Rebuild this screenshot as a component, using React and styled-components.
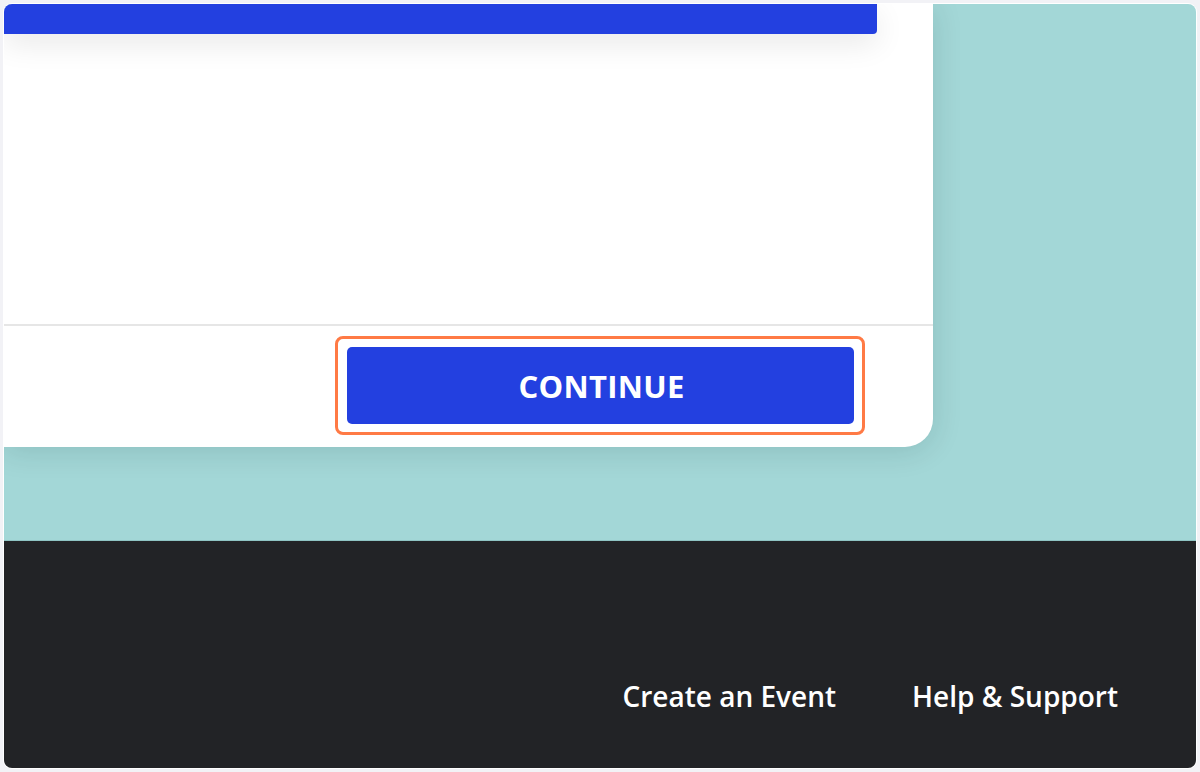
import React from 'react';
import styled, { createGlobalStyle } from 'styled-components';

const colors = {
  frame: '#f2f2f6',
  blue: '#2340e0',
  teal: '#a3d7d7',
  dark: '#222326',
  orange: '#ff7a45',
  divider: '#e6e6e6',
  white: '#ffffff',
};

const GlobalStyle = createGlobalStyle`
  html, body {
    margin: 0;
    padding: 0;
    background: ${colors.frame};
  }
  * {
    box-sizing: border-box;
  }
`;

const Frame = styled.div`
  margin: 4px;
  width: 1192px;
  height: 764px;
  border-radius: 8px;
  overflow: hidden;
  display: flex;
  flex-direction: column;
  box-shadow: 0 0 0 1px ${colors.white};
  font-family: 'Open Sans', 'Liberation Sans', sans-serif;
`;

const Stage = styled.main`
  height: 537px;
  background: ${colors.teal};
  border-bottom: 1px solid #8fc4c3;
  display: flex;
  align-items: flex-start;
`;

const Card = styled.section`
  width: 929px;
  height: 443px;
  background: ${colors.white};
  border-bottom-right-radius: 28px;
  box-shadow: 0 4px 30px rgba(0, 40, 40, 0.14);
  display: flex;
  flex-direction: column;
`;

const TopBar = styled.div`
  width: 873px;
  height: 30px;
  background: ${colors.blue};
  border-bottom-right-radius: 4px;
  box-shadow: 0 10px 30px rgba(0, 0, 0, 0.09);
`;

const CardBody = styled.div`
  flex: 1;
  border-bottom: 2px solid ${colors.divider};
`;

const CardFooter = styled.div`
  height: 121px;
  display: flex;
  justify-content: flex-end;
  align-items: flex-start;
  padding: 10px 68px 0 0;
`;

const FocusRing = styled.span`
  display: flex;
  border: 3px solid ${colors.orange};
  border-radius: 8px;
  padding: 8px 8px 8px 9px;
`;

const Button = styled.button`
  width: 507px;
  height: 77px;
  border: none;
  border-radius: 5px;
  background: ${colors.blue};
  color: ${colors.white};
  font-family: 'Open Sans', 'Liberation Sans', sans-serif;
  font-weight: 700;
  font-size: 31px;
  letter-spacing: 0.3px;
  padding: 0 0 0 2px;
  cursor: pointer;
`;

const Footer = styled.footer`
  flex: 1;
  background: ${colors.dark};
  display: flex;
  justify-content: flex-end;
  align-items: flex-start;
  gap: 76px;
  padding: 137px 78px 0 0;
`;

const FooterLink = styled.a`
  color: ${colors.white};
  font-size: 28px;
  font-weight: 600;
  line-height: 36px;
  text-decoration: none;
`;

export default function App() {
  return (
    <>
      <GlobalStyle />
      <Frame>
        <Stage>
          <Card>
            <TopBar />
            <CardBody />
            <CardFooter>
              <FocusRing>
                <Button>CONTINUE</Button>
              </FocusRing>
            </CardFooter>
          </Card>
        </Stage>
        <Footer>
          <FooterLink href="#">Create an Event</FooterLink>
          <FooterLink href="#">Help &amp; Support</FooterLink>
        </Footer>
      </Frame>
    </>
  );
}
